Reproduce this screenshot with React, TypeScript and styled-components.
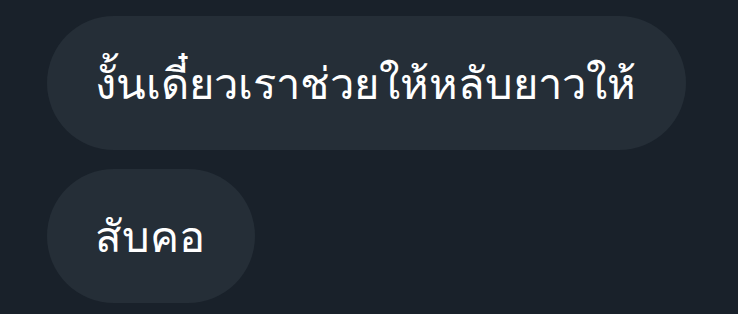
import React from "react";
import styled, { createGlobalStyle } from "styled-components";

const Global = createGlobalStyle`
  html, body { margin: 0; padding: 0; background: #19212a; }
  body { font-family: "Noto Sans", "DejaVu Sans", sans-serif; }
`;

const Column = styled.div`
  display: flex;
  flex-direction: column;
  align-items: flex-start;
  gap: 19px;
  padding: 16px 0 0 47px;
  width: 738px;
  height: 314px;
  box-sizing: border-box;
`;

const Bubble = styled.div`
  height: 134px;
  box-sizing: border-box;
  display: flex;
  align-items: center;
  padding: 0 50px 0 48px;
  border-radius: 67px;
  background: #252e37;
  color: #ffffff;
  font-size: 43.5px;
  white-space: nowrap;
`;

export default function App() {
  return (
    <>
      <Global />
      <Column>
        <Bubble>งั้นเดี๋ยวเราช่วยให้หลับยาวให้</Bubble>
        <Bubble>สับคอ</Bubble>
      </Column>
    </>
  );
}
